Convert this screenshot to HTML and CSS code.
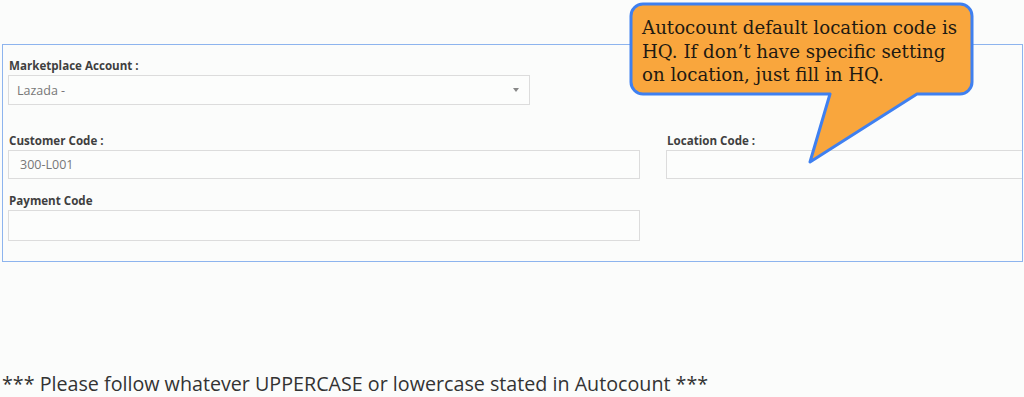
FILE: index.html
```html
<!DOCTYPE html>
<html>
<head>
<meta charset="utf-8">
<link rel="stylesheet" href="styles.css">
</head>
<body>
<div class="panel">
  <div class="field field-select">
    <div class="label">Marketplace Account :</div>
    <div class="select"><span>Lazada -</span><span class="caret"></span></div>
  </div>
  <div class="grid">
    <div class="field">
      <div class="label">Customer Code :</div>
      <div class="input"><span>300-L001</span></div>
    </div>
    <div class="field">
      <div class="label">Location Code :</div>
      <div class="input wide"></div>
    </div>
    <div class="field">
      <div class="label">Payment Code</div>
      <div class="input tall"></div>
    </div>
  </div>
</div>
<p class="note">*** Please follow whatever UPPERCASE or lowercase stated in Autocount ***</p>

<div class="callout">
  <svg class="bubble" width="360" height="170" viewBox="620 0 360 170">
    <path d="M643 4 H960 A12 12 0 0 1 972 16 V82 A12 12 0 0 1 960 94 H917 L810 162 L830 94 H643 A12 12 0 0 1 631 82 V16 A12 12 0 0 1 643 4 Z" fill="#f9a63d" stroke="#3f80f0" stroke-width="3" stroke-linejoin="round"/>
  </svg>
  <div class="callout-text">Autocount default location code is HQ. If don’t have specific setting on location, just fill in HQ.</div>
</div>
</body>
</html>
```
FILE: styles.css
```css
html, body {
  margin: 0;
  padding: 0;
  background: #fbfcfb;
}
body {
  padding-left: 2px;
  position: relative;
  height: 397px;
  overflow: hidden;
}
.panel {
  margin-top: 44px;
  width: 1021px;
  height: 218px;
  box-sizing: border-box;
  border: 1px solid #8db4ee;
  overflow: hidden;
  padding: 14px 0 0 5px;
}
.label {
  font-family: "Open Sans", sans-serif;
  font-weight: 700;
  font-size: 11.6px;
  line-height: 14px;
  color: #3f3f3f;
  padding-left: 1px;
  margin-bottom: 2px;
  white-space: nowrap;
}
.select, .input {
  box-sizing: border-box;
  border: 1px solid #dcdcdc;
  background: #fcfdfc;
  font-family: "Open Sans", sans-serif;
  font-size: 12.5px;
  color: #777;
  display: flex;
  align-items: center;
}
.select {
  width: 522px;
  height: 30px;
  padding: 0 8px;
  justify-content: space-between;
}
.caret {
  width: 0;
  height: 0;
  border-left: 3px solid transparent;
  border-right: 3px solid transparent;
  border-top: 4px solid #888;
  margin-right: 2px;
}
.grid {
  margin-top: 29px;
  display: grid;
  grid-template-columns: 632px 400px;
  column-gap: 26px;
  row-gap: 15px;
}
.input {
  height: 29px;
  padding: 0 11px;
}
.input.tall {
  height: 31px;
}
.note {
  margin: 110px 0 0 0;
  font-family: "Open Sans", sans-serif;
  font-size: 19.7px;
  line-height: 24px;
  color: #333;
  white-space: nowrap;
}
.callout {
  position: absolute;
  left: 620px;
  top: 0;
  width: 360px;
  height: 170px;
}
.bubble {
  display: block;
}
.callout-text {
  position: absolute;
  left: 22px;
  top: 16px;
  width: 322px;
  font-family: "DejaVu Serif", serif;
  font-size: 18.2px;
  line-height: 23.5px;
  color: #1f1a12;
}
```
